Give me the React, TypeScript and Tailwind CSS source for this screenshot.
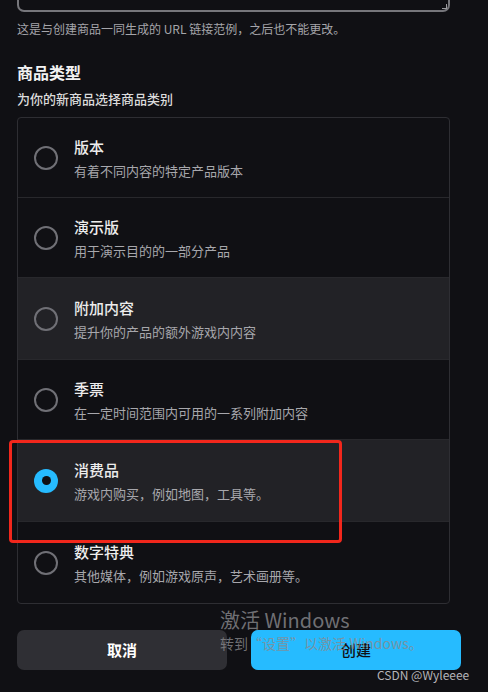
const categories = [
  { title: "版本", desc: "有着不同内容的特定产品版本", bg: "", h: "h-[80px]" },
  { title: "演示版", desc: "用于演示目的的一部分产品", bg: "", h: "h-[80px]" },
  { title: "附加内容", desc: "提升你的产品的额外游戏内内容", bg: "bg-[#222226]", h: "h-[82px]" },
  { title: "季票", desc: "在一定时间范围内可用的一系列附加内容", bg: "", h: "h-[80px]" },
  { title: "消费品", desc: "游戏内购买，例如地图，工具等。", bg: "bg-[#222226]", h: "h-[82px]", selected: true },
  { title: "数字特典", desc: "其他媒体，例如游戏原声，艺术画册等。", bg: "", h: "h-[81px]" },
];

function Radio({ checked }: { checked?: boolean }) {
  if (checked) {
    return (
      <span className="w-6 h-6 shrink-0 rounded-full bg-[#26bbff] flex items-center justify-center">
        <span className="w-[9px] h-[9px] rounded-full bg-[#101014]" />
      </span>
    );
  }
  return <span className="w-6 h-6 shrink-0 rounded-full border-2 border-[#707076]" />;
}

export default function App() {
  return (
    <div
      className="relative w-[488px] h-[692px] overflow-hidden bg-[#101014] text-white"
      style={{ fontFamily: '"Noto Sans CJK SC", "Noto Sans", sans-serif' }}
    >
      <div className="pl-[17px]">
        {/* bottom of the URL textarea */}
        <div className="relative w-[433px] h-[12px] border-x-2 border-b-2 border-[#76767b] rounded-b-[7px]">
          <span className="absolute right-[1px] bottom-[1px] w-[5px] h-[5px] border-r border-b border-[#9a9a9e]" />
        </div>
        <p className="mt-[9px] text-[12px] leading-[16px] text-[#a5a5aa]">
          这是与创建商品一同生成的 URL 链接范例，之后也不能更改。
        </p>

        <h2 className="mt-[24px] text-[16px] leading-[22px] font-bold text-[#f2f2f2]">商品类型</h2>
        <p className="mt-[7px] text-[13px] leading-[18px] font-medium text-[#dcdcdc]">为你的新商品选择商品类别</p>

        <div className="mt-[9px] w-[433px] border border-[#2e2e33] rounded-[4px] overflow-hidden divide-y divide-[#28282c]">
          {categories.map((c, i) => (
            <div key={i} className={`${c.h} ${c.bg} flex items-center pl-4`}>
              <Radio checked={c.selected} />
              <div className="ml-4 mt-[1px]">
                <div className="text-[15px] leading-[20px] font-medium text-[#ededed]">{c.title}</div>
                <div className="mt-[5px] text-[13px] leading-[18px] text-[#a7a7ac]">{c.desc}</div>
              </div>
            </div>
          ))}
        </div>

        <div className="mt-[26px] flex gap-[24px]">
          <button className="w-[210px] h-[40px] rounded-[7px] bg-[#2f2f34] text-[15px] font-bold text-white">
            取消
          </button>
          <button className="w-[210px] h-[40px] rounded-[7px] bg-[#26bbff] text-[15px] font-medium text-[#101014]">
            创建
          </button>
        </div>
      </div>

      {/* screenshot annotation */}
      <div className="absolute left-[9px] top-[440px] w-[333px] h-[103px] border-[3px] border-[#f2271c] rounded-[4px]" />

      {/* desktop watermarks */}
      <div className="absolute left-[220px] top-[606px] text-[20px] leading-[28px] text-[#8a8a8e]/80">激活 Windows</div>
      <div className="absolute left-[220px] top-[633px] text-[14px] leading-[20px] text-[#8a8a8e]/80">
        转到“设置”以激活 Windows。
      </div>
      <div className="absolute left-[377px] top-[666px] text-[12px] leading-[18px] text-[#b4b4b8]">CSDN @Wyleeee</div>
    </div>
  );
}
